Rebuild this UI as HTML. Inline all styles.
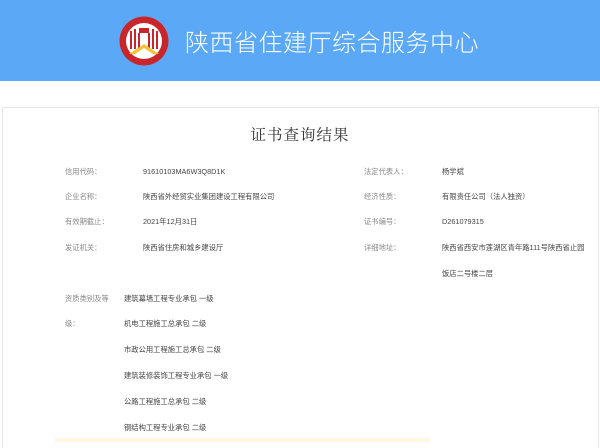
<!DOCTYPE html>
<html><head><meta charset="utf-8"><style>
body{margin:0;width:600px;height:442px;overflow:hidden;background:#fff;font-family:"Liberation Sans","Noto Sans CJK SC",sans-serif;position:relative}
.hdr{position:absolute;left:0;top:0;width:600px;height:81px;background:#5ba9f6}
.ht{position:absolute;left:185px;top:24px;font-size:24px;color:#fff;letter-spacing:0.5px;line-height:34px;font-family:"Noto Sans CJK SC",sans-serif;font-weight:300}
.panel{position:absolute;left:2px;top:107px;width:595px;height:340px;border:1px solid #e6e6e6;border-bottom:none}
.title{position:absolute;left:0;width:600px;top:123px;text-align:center;font-size:15.5px;color:#333;font-family:"Noto Serif CJK SC",serif;letter-spacing:1px}
.t{position:absolute;font-size:7.3px;line-height:12px;white-space:nowrap}
.l{color:#888}.v{color:#444}
.strip{position:absolute;left:55px;top:438px;width:375px;height:4px;background:#fff6e3}
</style></head><body>
<div class="hdr"></div>
<svg style="position:absolute;left:119px;top:16px" width="50" height="50" viewBox="0 0 50 50">
<circle cx="25" cy="25" r="24.5" fill="#c9262c"/>
<circle cx="25" cy="25" r="18" fill="#fff"/>
<g fill="#c9262c"><rect x="11" y="15" width="2" height="18"/><rect x="15" y="13" width="2" height="20"/><rect x="19" y="17" width="2" height="16"/><rect x="29" y="17" width="2" height="16"/><rect x="33" y="13" width="2" height="20"/><rect x="37" y="15" width="2" height="18"/><rect x="20" y="12" width="10" height="5"/></g>
<path d="M10 38 L25 28 L40 38 Z" fill="#f2c23a"/><path d="M16 38 L25 32 L34 38 Z" fill="#fff"/>
</svg>
<div class="ht">陕西省住建厅综合服务中心</div>
<div class="panel"></div>
<div class="title">证书查询结果</div>
<div class="t l" style="left:65px;top:166px">信用代码：</div><div class="t v" style="left:143px;top:166px">91610103MA6W3Q8D1K</div>
<div class="t l" style="left:65px;top:191px">企业名称：</div><div class="t v" style="left:143px;top:191px">陕西省外经贸实业集团建设工程有限公司</div>
<div class="t l" style="left:65px;top:216px">有效期截止：</div><div class="t v" style="left:143px;top:216px">2021年12月31日</div>
<div class="t l" style="left:65px;top:242px">发证机关：</div><div class="t v" style="left:143px;top:242px">陕西省住房和城乡建设厅</div>
<div class="t l" style="left:364px;top:166px">法定代表人：</div><div class="t v" style="left:442px;top:166px">杨学斌</div>
<div class="t l" style="left:364px;top:191px">经济性质：</div><div class="t v" style="left:442px;top:191px">有限责任公司（法人独资）</div>
<div class="t l" style="left:364px;top:216px">证书编号：</div><div class="t v" style="left:442px;top:216px">D261079315</div>
<div class="t l" style="left:364px;top:242px">详细地址：</div><div class="t v" style="left:442px;top:242px">陕西省西安市莲湖区青年路111号陕西省止园</div>
<div class="t v" style="left:442px;top:268px">饭店二号楼二层</div>
<div class="t l" style="left:65px;top:293px">资质类别及等</div><div class="t l" style="left:65px;top:318px">级：</div>
<div class="t v" style="left:124px;top:293px">建筑幕墙工程专业承包 一级</div>
<div class="t v" style="left:124px;top:318px">机电工程施工总承包 二级</div>
<div class="t v" style="left:124px;top:344px">市政公用工程施工总承包 二级</div>
<div class="t v" style="left:124px;top:370px">建筑装修装饰工程专业承包 一级</div>
<div class="t v" style="left:124px;top:396px">公路工程施工总承包 二级</div>
<div class="t v" style="left:124px;top:422px">钢结构工程专业承包 二级</div>
<div class="strip"></div>
</body></html>
